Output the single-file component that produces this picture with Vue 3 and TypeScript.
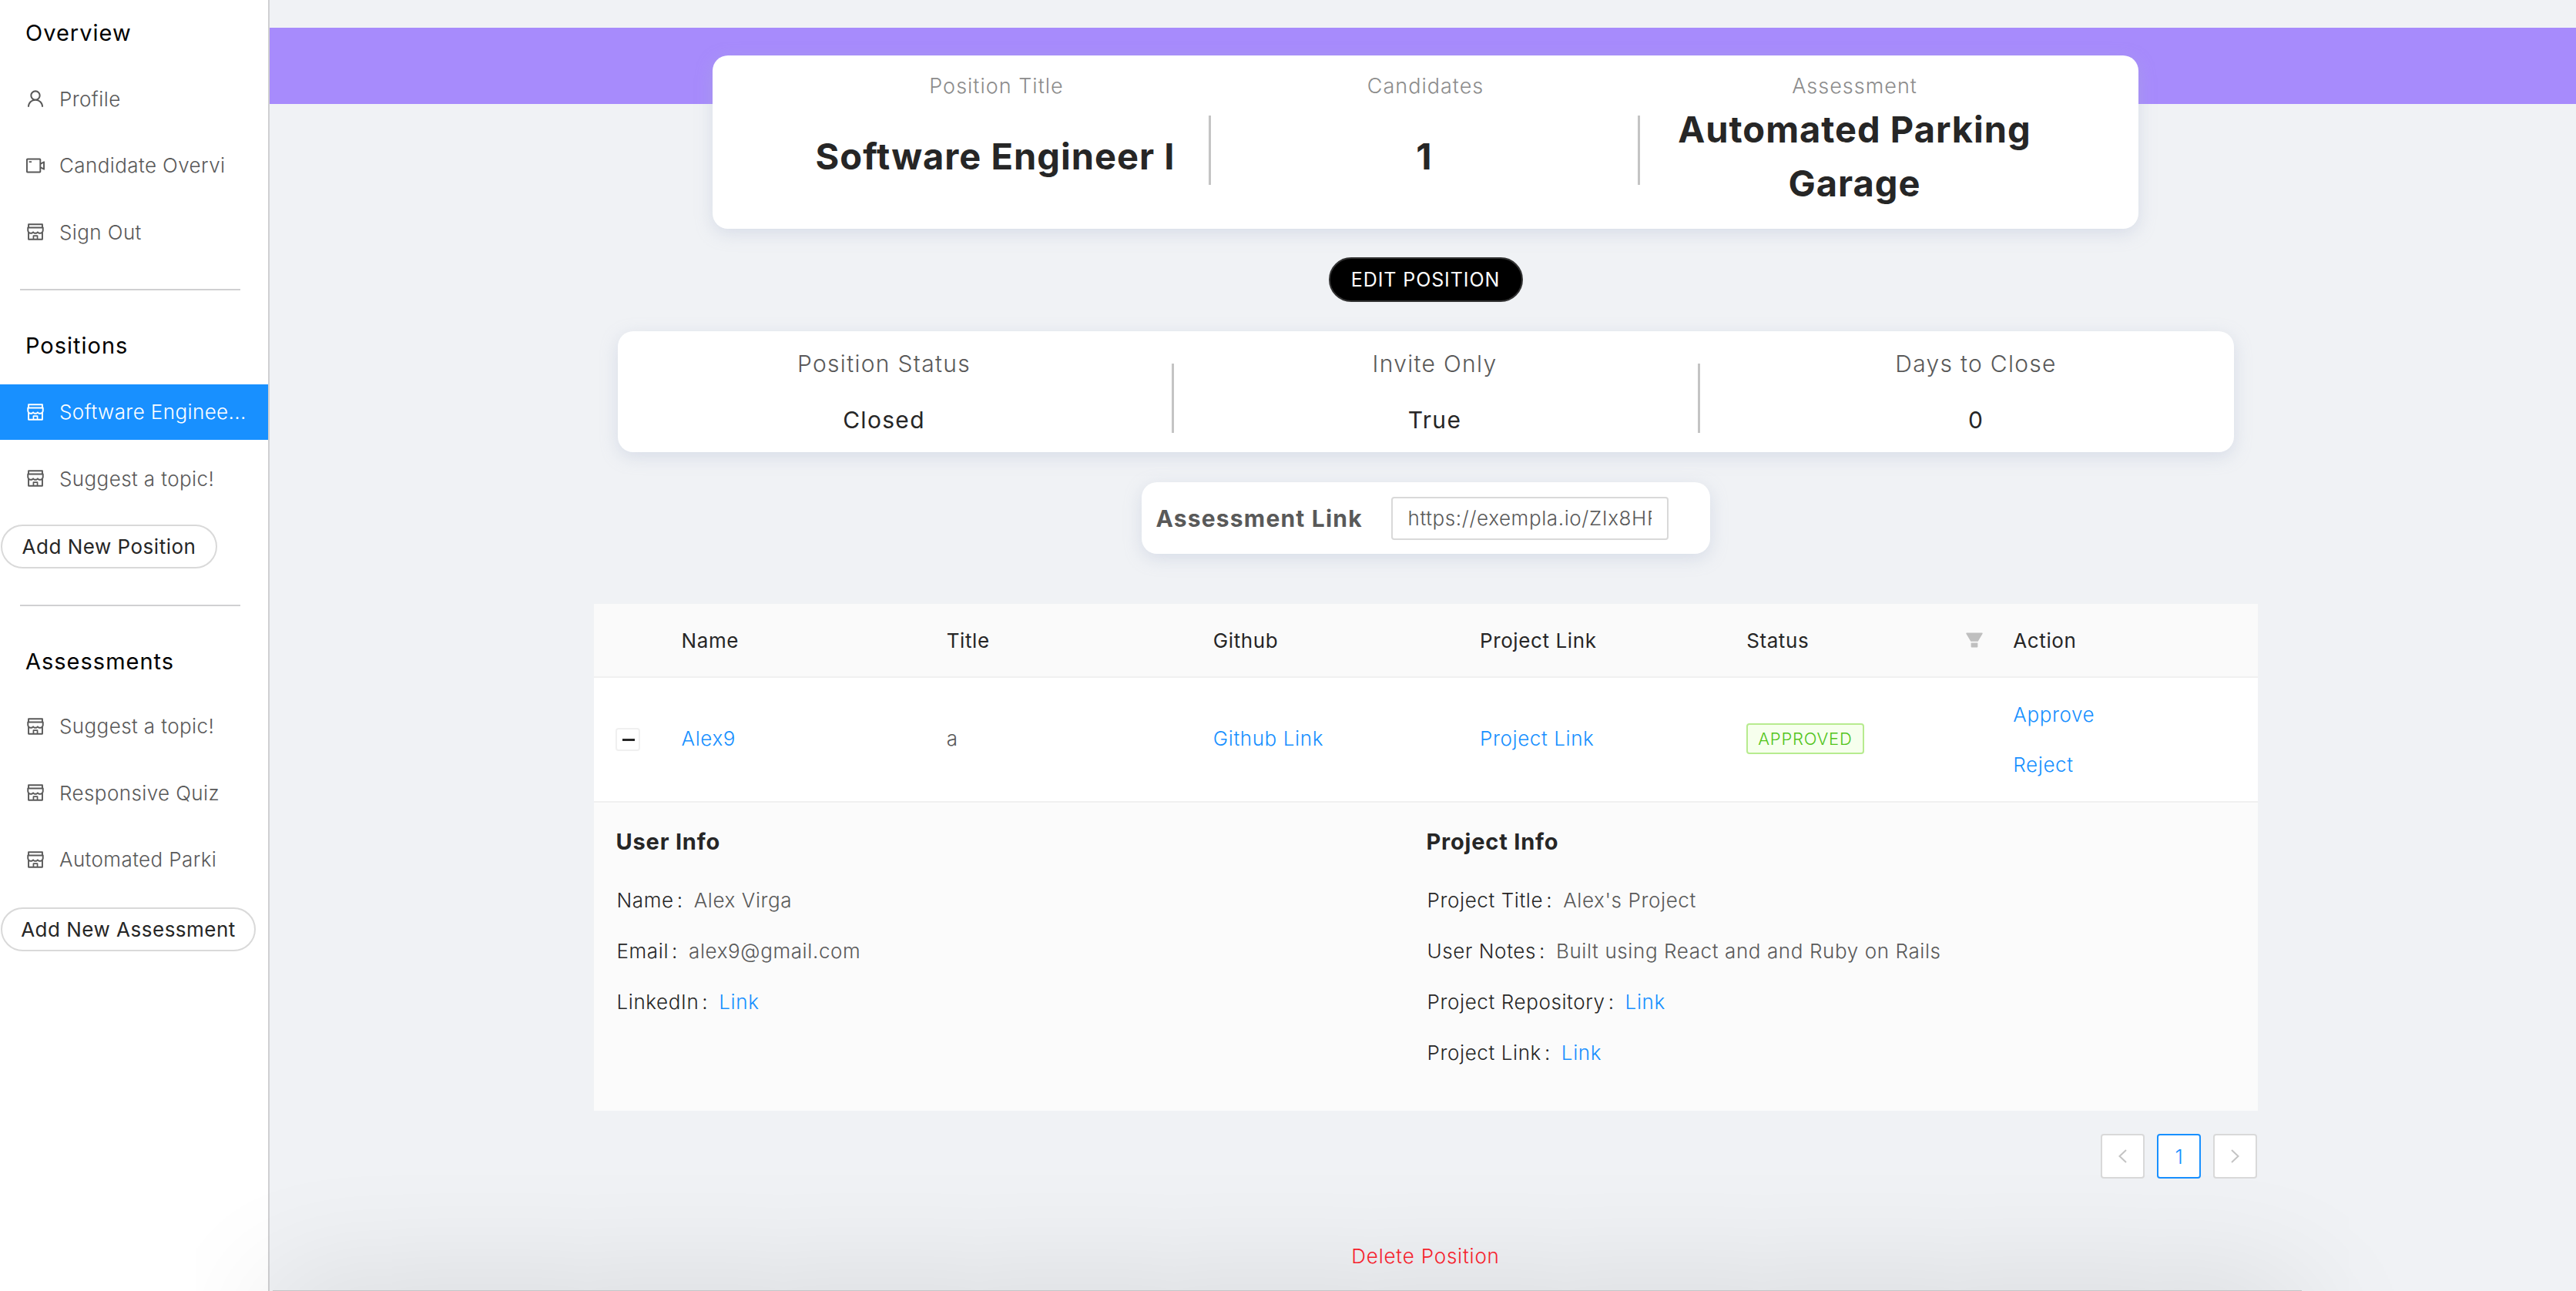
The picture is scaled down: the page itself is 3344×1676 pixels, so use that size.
<script setup lang="ts">
// Position detail page: side menu, summary cards, candidates table.
const icons: Record<string, string> = {
  user: "M858.5 763.6a374 374 0 0 0-80.6-119.5 375.63 375.63 0 0 0-119.5-80.6c-.4-.2-.8-.3-1.2-.5C719.5 518 760 444.7 760 362c0-137-111-248-248-248S264 225 264 362c0 82.7 40.5 156 102.8 201.1-.4.2-.8.3-1.2.5-44.8 18.9-85 46-119.5 80.6a375.63 375.63 0 0 0-80.6 119.5A371.7 371.7 0 0 0 136 901.8a8 8 0 0 0 8 8.2h60c4.4 0 7.9-3.5 8-7.8 2-77.2 33-149.5 87.8-204.3 56.7-56.7 132-87.9 212.2-87.9s155.5 31.2 212.2 87.9C779 752.7 810 825 812 902.2c.1 4.4 3.6 7.8 8 7.8h60a8 8 0 0 0 8-8.2c-1-47.8-10.9-94.3-29.5-138.2zM512 534c-45.9 0-89.1-17.9-121.6-50.4S340 407.9 340 362c0-45.9 17.9-89.1 50.4-121.6S466.1 190 512 190s89.1 17.9 121.6 50.4S684 316.1 684 362c0 45.9-17.9 89.1-50.4 121.6S557.9 534 512 534z",
  video: "M912 302.3L784 376V224c0-35.3-28.7-64-64-64H128c-35.3 0-64 28.7-64 64v576c0 35.3 28.7 64 64 64h592c35.3 0 64-28.7 64-64V648l128 73.7c21.3 12.3 48-3.1 48-27.6V330c0-24.6-26.7-40-48-27.7zM712 792H136V232h576v560zm176-167l-104-59.8V458.9L888 399v226zM208 360h112c4.4 0 8-3.6 8-8v-48c0-4.4-3.6-8-8-8H208c-4.4 0-8 3.6-8 8v48c0 4.4 3.6 8 8 8z",
  shop: "M882 272.1V144c0-17.7-14.3-32-32-32H174c-17.7 0-32 14.3-32 32v128.1c-16.7 1-30 14.9-30 31.9v131.7a177 177 0 0 0 14.4 70.4c4.3 10.2 9.6 19.8 15.6 28.9v345c0 17.6 14.3 32 32 32h676c17.7 0 32-14.3 32-32V535a175 175 0 0 0 15.6-28.9c9.5-22.3 14.4-46 14.4-70.4V304c0-17-13.3-30.9-30-31.9zM214 184h596v88H214v-88zm362 656.1H448V736h128v104.1zm234 0H640V704c0-17.7-14.3-32-32-32H416c-17.7 0-32 14.3-32 32v136.1H214V597.9c2.9 1.4 5.9 2.8 9 4 22.3 9.4 46 14.1 70.4 14.1s48-4.7 70.4-14.1c13.8-5.8 26.8-13.2 38.7-22.1.2-.1.4-.1.6 0a180.4 180.4 0 0 0 38.7 22.1c22.3 9.4 46 14.1 70.4 14.1 24.4 0 48-4.7 70.4-14.1 13.8-5.8 26.8-13.2 38.7-22.1.2-.1.4-.1.6 0a180.4 180.4 0 0 0 38.7 22.1c22.3 9.4 46 14.1 70.4 14.1 24.4 0 48-4.7 70.4-14.1 3-1.3 6-2.6 9-4v242.2zm30-404.4c0 59.8-49 108.3-109.3 108.3-40.8 0-76.4-22.1-95.2-54.9-2.9-5-8.1-8.1-13.9-8.1h-.6c-5.7 0-11 3.1-13.9 8.1A109.24 109.24 0 0 1 512 544c-40.7 0-76.2-22-95-54.7-3-5.1-8.4-8.3-14.3-8.3s-11.4 3.2-14.3 8.3a109.63 109.63 0 0 1-95.1 54.7C233 544 184 495.5 184 435.7v-91.2c0-.3.2-.5.5-.5h655c.3 0 .5.2.5.5v91.2z",
};

interface MenuItem { label: string; icon: string; active?: boolean }

const overview: MenuItem[] = [
  { label: "Profile", icon: "user" },
  { label: "Candidate Overvi", icon: "video" },
  { label: "Sign Out", icon: "shop" },
];
const positions: MenuItem[] = [
  { label: "Software Enginee...", icon: "shop", active: true },
  { label: "Suggest a topic!", icon: "shop" },
];
const assessments: MenuItem[] = [
  { label: "Suggest a topic!", icon: "shop" },
  { label: "Responsive Quiz", icon: "shop" },
  { label: "Automated Parki", icon: "shop" },
];

const columns = ["Name", "Title", "Github", "Project Link", "Status", "Action"];
</script>

<template>
  <div class="page">
    <aside class="side">
      <h3 class="side-title">Overview</h3>
      <div v-for="m in overview" :key="m.label" class="item">
        <svg class="ico" viewBox="64 64 896 896"><path :d="icons[m.icon]" /></svg>
        <span>{{ m.label }}</span>
      </div>
      <div class="side-rule"></div>

      <h3 class="side-title spaced">Positions</h3>
      <div v-for="m in positions" :key="m.label" class="item" :class="{ active: m.active }">
        <svg class="ico" viewBox="64 64 896 896"><path :d="icons[m.icon]" /></svg>
        <span>{{ m.label }}</span>
      </div>
      <button class="add add-pos">Add New Position</button>
      <div class="side-rule low"></div>

      <h3 class="side-title spaced tight">Assessments</h3>
      <div v-for="m in assessments" :key="m.label" class="item">
        <svg class="ico" viewBox="64 64 896 896"><path :d="icons[m.icon]" /></svg>
        <span>{{ m.label }}</span>
      </div>
      <button class="add add-ass">Add New Assessment</button>
    </aside>

    <main class="main">
      <div class="band"></div>
      <div class="content">
        <section class="card head-card">
          <div class="stat">
            <div class="stat-label">Position Title</div>
            <div class="stat-body">
              <div class="stat-value">Software Engineer I</div>
              <i class="rule"></i>
            </div>
          </div>
          <div class="stat">
            <div class="stat-label">Candidates</div>
            <div class="stat-body">
              <div class="stat-value">1</div>
              <i class="rule"></i>
            </div>
          </div>
          <div class="stat">
            <div class="stat-label">Assessment</div>
            <div class="stat-body">
              <div class="stat-value wrap">Automated Parking Garage</div>
            </div>
          </div>
        </section>

        <button class="edit">EDIT POSITION</button>

        <section class="card info-card">
          <div class="info first">
            <div class="info-label">Position Status</div>
            <div class="info-value">Closed</div>
          </div>
          <i class="rule tall"></i>
          <div class="info mid">
            <div class="info-label">Invite Only</div>
            <div class="info-value">True</div>
          </div>
          <i class="rule tall"></i>
          <div class="info last">
            <div class="info-label">Days to Close</div>
            <div class="info-value">0</div>
          </div>
        </section>

        <section class="card link-card">
          <span class="link-label">Assessment Link</span>
          <div class="link-input"><span>https://exempla.io/ZIx8HF</span></div>
        </section>

        <table class="table">
          <colgroup>
            <col class="col-expand" />
            <col v-for="c in columns" :key="c" class="col-data" />
          </colgroup>
          <thead>
            <tr>
              <th></th>
              <th v-for="c in columns" :key="c">
                <div class="th-inner">
                  {{ c }}
                  <svg v-if="c === 'Status'" class="filter" viewBox="64 64 896 896">
                    <path d="M349 838c0 17.7 14.2 32 31.8 32h262.4c17.6 0 31.8-14.3 31.8-32V642H349v196zm531.1-684H143.9c-24.5 0-39.8 26.7-27.5 48l221.3 376h348.8l221.3-376c12.1-21.3-3.2-48-27.7-48z" />
                  </svg>
                </div>
              </th>
            </tr>
          </thead>
          <tbody>
            <tr class="row">
              <td class="expand-cell"><button class="expand"><i></i></button></td>
              <td><a>Alex9</a></td>
              <td class="plain">a</td>
              <td><a>Github Link</a></td>
              <td><a>Project Link</a></td>
              <td><span class="tag">APPROVED</span></td>
              <td class="actions"><a>Approve</a><a>Reject</a></td>
            </tr>
            <tr class="detail">
              <td colspan="7">
                <div class="detail-grid">
                  <div class="detail-col">
                    <h4>User Info</h4>
                    <p><b>Name</b><span>Alex Virga</span></p>
                    <p><b>Email</b><span>alex9@gmail.com</span></p>
                    <p><b>LinkedIn</b><a>Link</a></p>
                  </div>
                  <div class="detail-col">
                    <h4>Project Info</h4>
                    <p><b>Project Title</b><span>Alex's Project</span></p>
                    <p><b>User Notes</b><span>Built using React and and Ruby on Rails</span></p>
                    <p><b>Project Repository</b><a>Link</a></p>
                    <p><b>Project Link</b><a>Link</a></p>
                  </div>
                </div>
              </td>
            </tr>
          </tbody>
        </table>

        <nav class="pager">
          <button class="pg">
            <svg viewBox="0 0 13 18"><path d="M11 1 2.5 9 11 17" /></svg>
          </button>
          <button class="pg current">1</button>
          <button class="pg">
            <svg viewBox="0 0 13 18"><path d="M2 1 10.5 9 2 17" /></svg>
          </button>
        </nav>

        <a class="delete">Delete Position</a>
      </div>
    </main>
    <div class="edge-shadow"></div>
  </div>
</template>

<style>
html, body { margin: 0; background: #f0f2f5; }
</style>

<style scoped>
.page { position: relative; display: flex; width: 3344px; height: 1676px; overflow: hidden; background: #f0f2f5; font-family: Inter, "Liberation Sans", sans-serif; font-size: 26px; letter-spacing: 0.6px; color: #595959; }

.side { flex: none; box-sizing: border-box; width: 350px; padding-top: 23px; background: #fff; border-right: 2px solid #d0d0d2; }
.side-title { margin: 0 0 29px 33px; height: 40px; line-height: 40px; font-size: 29px; font-weight: 400; color: #000; letter-spacing: 1px; }
.side-title.spaced { margin-top: 52px; margin-bottom: 30px; }
.side-title.spaced.tight { margin-bottom: 28px; }
.item { display: flex; align-items: center; height: 72px; margin-bottom: 14.5px; padding-left: 34px; font-size: 26px; font-weight: 300; color: #595959; white-space: nowrap; overflow: hidden; letter-spacing: 0.4px; }
.item .ico { flex: none; width: 24px; height: 24px; margin-right: 19px; fill: currentColor; }
.item.active { background: #1890ff; color: #fff; }
.side-rule { height: 2px; margin: 37.5px 36px 0 26px; background: #d0d0d2; }
.side-rule.low { margin-top: 47px; }
.add { display: block; height: 57px; margin-left: 1px; padding: 0; background: #fff; border: 2px solid #d9d9d9; border-radius: 29px; font-family: inherit; font-size: 26px; font-weight: 400; letter-spacing: 0.5px; color: #262626; white-space: nowrap; }
.add-pos { width: 281px; margin-top: 23.5px; }
.add-ass { width: 331px; margin-top: 26px; }

.main { flex: 1; min-width: 0; padding-top: 36px; }
.band { height: 99px; background: #a78bfc; }
.content { display: flex; flex-direction: column; align-items: center; padding-left: 7px; }

.card { background: #fff; border-radius: 20px; box-shadow: 0 6px 22px rgba(170, 180, 205, 0.35); }
.head-card { position: relative; display: flex; box-sizing: border-box; width: 1851px; height: 225px; margin-top: -63px; padding: 20px 90px 0; }
.stat { flex: 1 1 0; min-width: 0; }
.stat-label { height: 40px; line-height: 40px; text-align: center; font-size: 27px; font-weight: 300; letter-spacing: 1px; color: #8c8c8c; }
.stat-body { display: flex; align-items: center; height: 142px; }
.stat-value { flex: 1; text-align: center; font-size: 47px; font-weight: 700; line-height: 70px; letter-spacing: 1px; color: #262626; white-space: nowrap; }
.stat-value.wrap { padding: 0 40px; white-space: normal; }
.rule { flex: none; display: block; align-self: flex-start; width: 3px; height: 90px; margin-top: 18px; background: #c4c4c4; }
.rule.tall { margin-top: 42px; }

.edit { width: 252px; height: 58px; margin-top: 37px; padding: 0; background: #000; border: 2px solid #333; border-radius: 29px; font-family: inherit; font-size: 25px; font-weight: 400; letter-spacing: 0.9px; color: #fff; white-space: nowrap; }

.info-card { display: flex; box-sizing: border-box; width: 2098px; height: 157px; margin-top: 38px; }
.info { box-sizing: border-box; padding-top: 24px; text-align: center; font-size: 30px; letter-spacing: 1.3px; }
.info.first { width: 719px; padding-right: 27px; }
.info.mid { width: 680px; padding-right: 2px; }
.info.last { flex: 1; padding-left: 24px; }
.info-label { height: 36px; line-height: 36px; font-weight: 300; color: #595959; }
.info-value { height: 36px; margin-top: 37px; line-height: 36px; color: #262626; }

.link-card { display: flex; align-items: center; box-sizing: border-box; width: 738px; height: 93px; margin-top: 39px; padding-left: 19px; }
.link-label { flex: none; width: 305px; font-size: 30px; font-weight: 700; letter-spacing: 1.2px; color: #595959; white-space: nowrap; }
.link-input { box-sizing: border-box; width: 360px; height: 56px; padding: 0 20px; line-height: 52px; background: #fff; border: 2px solid #d9d9d9; border-radius: 4px; font-weight: 300; color: #595959; }
.link-input span { display: block; overflow: hidden; white-space: nowrap; }

.table { width: 2160px; margin-top: 65px; border-collapse: collapse; table-layout: fixed; background: #fff; }
.col-expand { width: 83px; }
.col-data { width: 346px; }
.table th { height: 94px; padding: 0 29px; background: #fafafa; border-bottom: 2px solid #f0f0f0; text-align: left; font-weight: 400; color: #262626; }
.th-inner { display: flex; align-items: center; justify-content: space-between; }
.filter { width: 24px; height: 24px; margin-right: -20px; fill: #bfbfbf; }
.row td { height: 157px; padding: 0 29px 3px; border-bottom: 2px solid #f0f0f0; font-weight: 300; }
.table th:nth-child(2), .row td:nth-child(2) { padding-left: 31px; }
a { color: #1890ff; font-weight: 300; }
.row .expand-cell { padding: 0 0 0 28px; }
.expand { position: relative; display: block; width: 32px; height: 30px; padding: 0; background: #fff; border: 2px solid #f0f0f0; border-radius: 4px; }
.expand i { position: absolute; left: 7px; top: 12px; width: 16px; height: 3px; background: #262626; }
.tag { display: inline-block; box-sizing: border-box; height: 40px; padding: 0 13px; line-height: 36px; background: #f6ffed; border: 2px solid #b7eb8f; border-radius: 4px; font-size: 22px; font-weight: 300; letter-spacing: 0.8px; color: #52c41a; }
.row .actions { padding-bottom: 0; }
.actions a { display: block; line-height: 35px; }
.actions a + a { margin-top: 30px; }

.detail td { height: 400px; padding: 0; background: #fbfbfb; vertical-align: top; }
.detail-grid { display: flex; padding: 31px 0 0 29px; }
.detail-col { width: 1052px; }
.detail-col h4 { margin: 0 0 36px; height: 40px; line-height: 40px; font-size: 29px; font-weight: 700; letter-spacing: 0.8px; color: #262626; }
.detail-col p { display: flex; height: 40px; margin: 0 0 26px 1px; line-height: 40px; font-weight: 300; }
.detail-col b { font-weight: 300; color: #262626; }
.detail-col b::after { content: ":"; margin: 0 14px 0 4px; }
.detail-col span { color: #595959; }

.pager { display: flex; gap: 16px; align-self: flex-end; margin: 30px 414px 0 0; }
.pg { display: flex; align-items: center; justify-content: center; box-sizing: border-box; width: 57px; height: 58px; padding: 0; background: #fff; border: 2px solid #d9d9d9; border-radius: 4px; font-family: inherit; font-size: 26px; font-weight: 300; color: #1890ff; }
.pg.current { border-color: #1890ff; }
.pg svg { width: 13px; height: 18px; fill: none; stroke: #c4c4c4; stroke-width: 2; }

.delete { position: relative; z-index: 2; margin-top: 85px; font-size: 26px; font-weight: 300; letter-spacing: 0.8px; color: #f5222d; line-height: 32px; }

.edge-shadow { position: absolute; z-index: 1; left: 354px; top: 1675px; width: 2634px; height: 300px; background: #c4c6c8; box-shadow: 0 0 170px rgba(0, 0, 0, 0.12); }
</style>
